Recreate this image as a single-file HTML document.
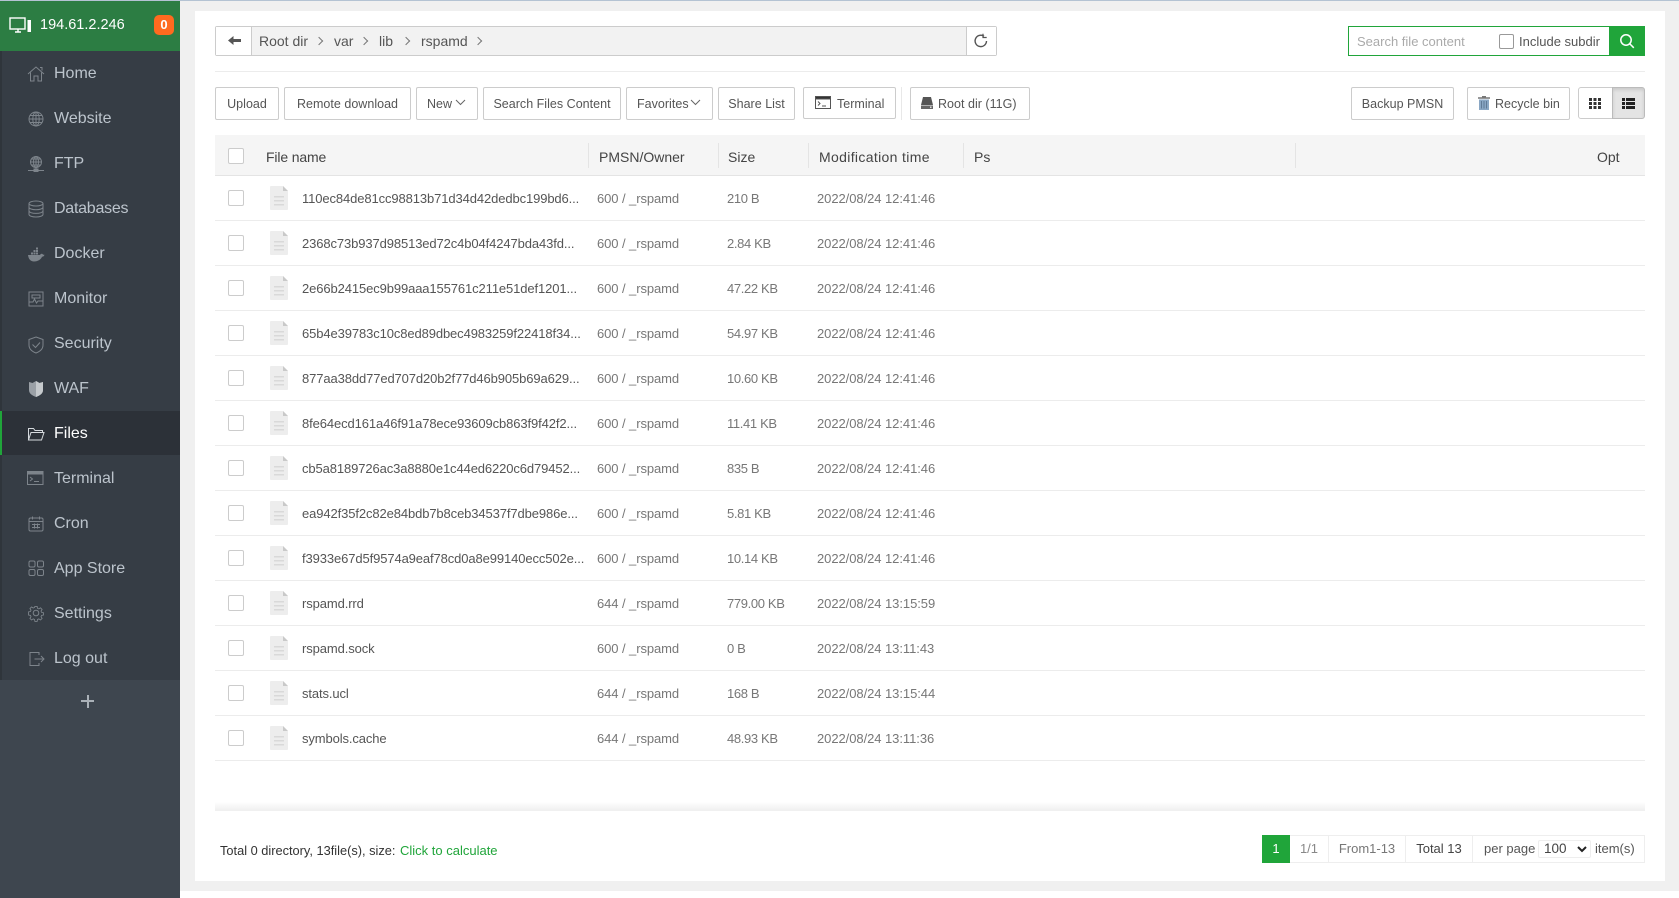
<!DOCTYPE html>
<html><head><meta charset="utf-8"><title>Files</title>
<style>
html,body{margin:0;padding:0;background:#fff;width:1679px;height:898px;overflow:hidden}
body{font-family:"Liberation Sans",Arial,sans-serif;position:relative;font-size:13px;color:#555}
div,span,svg{position:absolute;box-sizing:border-box}
.t{white-space:nowrap}
.m{left:54px;font-size:16px;color:#bcc4cc;line-height:20px;white-space:nowrap}
.ic{left:27px;width:18px;height:18px;fill:none;stroke:#7d848b;stroke-width:1}
.b{top:87px;height:33px;border:1px solid #ccc;border-radius:2px;background:#fff;color:#555;line-height:33px;font-size:12.5px;text-align:center;white-space:nowrap;letter-spacing:.02px}
.h{top:143px;width:1px;height:25px;background:#e4e4e4}
.ht{top:147px;font-size:14px;line-height:20px;color:#444;white-space:nowrap}
.r{left:215px;width:1430px;height:45px;border-bottom:1px solid #ececec}
.c{left:13px;top:14px;width:16px;height:16px;border:1px solid #ccc;border-radius:2px;background:#fff}
.f{left:55px;top:10px;width:18px;height:24px}
.r span{top:13px;line-height:20px;white-space:nowrap;font-size:13px}
.n{left:87px;color:#555;letter-spacing:-.11px}.o{left:382px;color:#777;letter-spacing:-.08px}.s{left:512px;color:#777;letter-spacing:-.35px}.d{left:602px;color:#777;letter-spacing:-.06px}
.p{top:835px;height:28px;border:1px solid #eee;border-left:0;line-height:26px;text-align:center;font-size:13px;white-space:nowrap}
.cv{width:6px;height:6px;border-top:1.3px solid #777;border-right:1.3px solid #777;transform:rotate(45deg);top:38px}
</style></head><body>
<svg width="0" height="0" style="position:absolute"><defs>
<symbol id="fi" viewBox="0 0 18 24"><path d="M0 1a1 1 0 0 1 1-1h12l5 5v18a1 1 0 0 1-1 1H1a1 1 0 0 1-1-1z" fill="#ededed"/><path d="M13 0l5 5h-5z" fill="#c9c9c9"/><path d="M4 10h10v1.5H4zM4 14h10v1.5H4zM4 18h10v1.5H4z" fill="#d9d9d9"/></symbol>
</defs></svg>

<div style="left:0;top:0;width:1679px;height:1px;background:#b4c3d3"></div>
<div style="left:0;top:1px;width:1679px;height:890px;background:#f0f0f0"></div>

<!-- sidebar -->
<div style="left:0;top:1px;width:180px;height:897px;background:#3e464f"></div>
<div style="left:0;top:51px;width:180px;height:629px;background:#363d45"></div>
<div style="left:0;top:51px;width:2px;height:629px;background:#2f353b"></div>
<div style="left:0;top:1px;width:180px;height:50px;background:#2c7d43"></div>
<svg style="left:9px;top:16px;width:24px;height:19px" viewBox="0 0 24 19" fill="none" stroke="#fff" stroke-width="1.4"><rect x="1" y="2" width="15" height="11"/><path d="M6 16h6M9 13v3"/><rect x="18.5" y="4" width="3.5" height="12" fill="#fff" stroke="none"/></svg>
<div class="t" style="left:40px;top:15px;font-size:14.5px;line-height:20px;color:#fff">194.61.2.246</div>
<div style="left:154px;top:15px;width:20px;height:20px;background:#ff6a1f;border-radius:5px;color:#fff;font-weight:bold;font-size:13px;line-height:20px;text-align:center">0</div>

<div style="left:0;top:411px;width:180px;height:44px;background:#2c3138"></div>
<div style="left:0;top:411px;width:2px;height:44px;background:#20a53a"></div>

<svg class="ic" style="top:65px" viewBox="0 0 18 18"><path d="M1 9l8-7 8 7M3.500 7.500V16H7v-5h4v5h3.500V7.500M13 2.500h2v3"/></svg>
<div class="m" style="top:64px">Home</div>
<svg class="ic" style="top:110px" viewBox="0 0 18 18"><circle cx="9" cy="9" r="7"/><ellipse cx="9" cy="9" rx="3.200" ry="7"/><path d="M2 9h14M3 5.500h12M3 12.500h12M9 2v14"/></svg>
<div class="m" style="top:109px">Website</div>
<svg class="ic" style="top:155px" viewBox="0 0 18 18"><circle cx="9" cy="7" r="5.500"/><ellipse cx="9" cy="7" rx="2.500" ry="5.500"/><path d="M3.500 7h11M4.500 4h9M4.500 10h9M9 1.500v11M9 13v2M1 15.500h16"/><rect x="7" y="14" width="4" height="2.500" fill="#7d848b"/></svg>
<div class="m" style="top:154px">FTP</div>
<svg class="ic" style="top:200px" viewBox="0 0 18 18"><ellipse cx="9" cy="3.500" rx="7" ry="2.500"/><path d="M2 3.500v11c0 1.400 3 2.500 7 2.500s7-1.100 7-2.500v-11M2 7.200c0 1.400 3 2.500 7 2.500s7-1.100 7-2.500M2 10.900c0 1.400 3 2.500 7 2.500s7-1.100 7-2.500"/></svg>
<div class="m" style="top:199px;letter-spacing:-.25px">Databases</div>
<svg class="ic" style="top:246px;stroke:none;fill:#7d848b" viewBox="0 0 18 18"><path d="M1 9h12c.5-1 1.500-1.500 2.500-1 .2.500 1 .8 2 .8-.5 1.500-1.500 2-2.500 2C14 13.500 11 15.500 7 15.500 3.500 15.500 1.500 13 1 9z"/><path d="M4 6.500h2v2H4zM6.500 6.500h2v2h-2zM9 6.500h2v2H9zM6.500 4h2v2h-2zM9 4h2v2H9zM9 1.500h2v2H9z"/></svg>
<div class="m" style="top:244px">Docker</div>
<svg class="ic" style="top:290px" viewBox="0 0 18 18"><rect x="2" y="2" width="14" height="14"/><path d="M2 12h4l1.500-3 2 4 1.500-2h5M5 5h8v3H5z"/></svg>
<div class="m" style="top:289px">Monitor</div>
<svg class="ic" style="top:336px" viewBox="0 0 18 18"><path d="M9 1l7 2.500V9c0 4-3 6.500-7 8-4-1.500-7-4-7-8V3.500z"/><path d="M5.500 8.500L8.500 11.500 13 6.500"/></svg>
<div class="m" style="top:334px">Security</div>
<svg class="ic" style="top:380px;stroke:none;fill:#9aa0a6" viewBox="0 0 18 18"><path d="M2 2l3.500 1L9 1l3.500 2L16 2v8c0 3.500-3 5.500-7 7-4-1.500-7-3.500-7-7z"/><path d="M9 1l3.500 2L16 2v8c0 3.500-3 5.500-7 7z" fill="#c5c9cc"/></svg>
<div class="m" style="top:379px">WAF</div>
<svg class="ic" style="top:425px;stroke:#d6dade" viewBox="0 0 18 18"><path d="M1.500 15V3.500h5l1.500 2h7.500v2M1.500 15l2.500-7.500h13L14.500 15z"/></svg>
<div class="m" style="top:424px;color:#fff">Files</div>
<svg class="ic" style="top:469px;left:27px;width:17px" viewBox="0 0 17 18"><rect x=".5" y="2.500" width="15.500" height="13"/><rect x=".5" y="2.500" width="15.500" height="2.500" fill="#7d848b"/><path d="M3 8l2.500 2L3 12M7 12.500h5"/></svg>
<div class="m" style="top:469px">Terminal</div>
<svg class="ic" style="top:515px" viewBox="0 0 18 18"><rect x="2" y="3" width="14" height="13" rx="1.500"/><path d="M2 6.500h14M5.500 1.500v3M12.500 1.500v3M5 9.500h8M5 12.500h8M7.500 8.500v5M10.500 8.500v5"/></svg>
<div class="m" style="top:514px">Cron</div>
<svg class="ic" style="top:559px" viewBox="0 0 18 18" stroke-width="1.200"><rect x="2" y="2" width="6" height="6" rx="1.500"/><rect x="10.500" y="2" width="6" height="6" rx="1.500"/><rect x="2" y="10.500" width="6" height="6" rx="1.500"/><rect x="10.500" y="10.500" width="6" height="6" rx="1.500"/></svg>
<div class="m" style="top:559px">App Store</div>
<svg class="ic" style="top:604px" viewBox="0 0 18 18"><circle cx="9" cy="9" r="2.800"/><path d="M7.700 1.500h2.600l.4 2.200 1.500.6 1.900-1.200 1.800 1.800-1.200 1.900.6 1.500 2.200.4v2.600l-2.200.4-.6 1.500 1.200 1.900-1.800 1.800-1.900-1.200-1.500.6-.4 2.200H7.700l-.4-2.200-1.500-.6-1.900 1.200-1.800-1.800 1.200-1.900-.6-1.500-2.200-.4V7.700l2.200-.4.600-1.500-1.200-1.900 1.800-1.800 1.900 1.200 1.500-.6z" transform="translate(1.100 1.100) scale(.88)"/></svg>
<div class="m" style="top:604px">Settings</div>
<svg class="ic" style="top:650px" viewBox="0 0 18 18"><path d="M12 5V2.500H3v13h9V13M7.500 9H17M14 6l3 3-3 3"/></svg>
<div class="m" style="top:649px">Log out</div>
<div style="left:81px;top:700px;width:13px;height:2px;background:#aab1b8"></div>
<div style="left:86.500px;top:694.500px;width:2px;height:13px;background:#aab1b8"></div>

<!-- card -->
<div style="left:195px;top:11px;width:1470px;height:870px;background:#fff"></div>

<!-- breadcrumb -->
<div style="left:215px;top:26px;width:782px;height:30px;border:1px solid #ccc;border-radius:2px;background:#f2f2f2"></div>
<div style="left:216px;top:27px;width:36px;height:28px;background:#fff;border-right:1px solid #ccc"></div>
<svg style="left:228px;top:35px;width:13px;height:11px" viewBox="0 0 13 11"><path d="M0 5.500L5.500 1v3H13v3H5.500v3z" fill="#555"/></svg>
<div class="t" style="left:259px;top:31px;font-size:14px;line-height:20px">Root dir</div>
<div class="cv" style="left:316px"></div>
<div class="t" style="left:334px;top:31px;font-size:14px;line-height:20px">var</div>
<div class="cv" style="left:361px"></div>
<div class="t" style="left:379px;top:31px;font-size:14px;line-height:20px">lib</div>
<div class="cv" style="left:403px"></div>
<div class="t" style="left:421px;top:31px;font-size:14px;line-height:20px">rspamd</div>
<div class="cv" style="left:475px"></div>
<div style="left:966px;top:27px;width:30px;height:28px;background:#fff;border-left:1px solid #ccc"></div>
<svg style="left:973px;top:33px;width:16px;height:16px" viewBox="0 0 16 16" fill="none" stroke="#555" stroke-width="1.400"><path d="M13.500 8A5.700 5.700 0 1 1 11 3.200"/><path d="M10 .8v3.700h3.700" stroke-width="1.200"/></svg>

<!-- search -->
<div style="left:1348px;top:26px;width:297px;height:30px;border:1px solid #20a53a;background:#fff"></div>
<div class="t" style="left:1357px;top:32px;line-height:20px;color:#aaa">Search file content</div>
<div style="left:1499px;top:34px;width:15px;height:15px;border:1px solid #999;border-radius:2px;background:#fff"></div>
<div class="t" style="left:1519px;top:32px;line-height:20px;color:#555">Include subdir</div>
<div style="left:1609px;top:26px;width:36px;height:30px;background:#20a53a"></div>
<svg style="left:1619px;top:33px;width:16px;height:16px" viewBox="0 0 16 16" fill="none" stroke="#fff" stroke-width="1.500"><circle cx="7" cy="7" r="5.200"/><path d="M11 11l3.800 3.800"/></svg>

<div style="left:215px;top:71px;width:1430px;height:1px;background:#ececec"></div>

<!-- toolbar -->
<div class="b" style="left:215px;width:64px">Upload</div>
<div class="b" style="left:284px;width:127px">Remote download</div>
<div class="b" style="left:416px;width:62px;text-align:left;padding-left:10px">New</div>
<svg style="left:455px;top:99px;width:11px;height:7px" viewBox="0 0 11 7" fill="none" stroke="#666" stroke-width="1"><path d="M1 1l4.500 4.500L10 1"/></svg>
<div class="b" style="left:483px;width:138px">Search Files Content</div>
<div class="b" style="left:626px;width:87px;text-align:left;padding-left:10px">Favorites</div>
<svg style="left:690px;top:99px;width:11px;height:7px" viewBox="0 0 11 7" fill="none" stroke="#666" stroke-width="1"><path d="M1 1l4.500 4.500L10 1"/></svg>
<div class="b" style="left:718px;width:77px">Share List</div>
<div class="b" style="left:803px;width:93px;height:32px;text-align:left;padding-left:33px">Terminal</div>
<svg style="left:815px;top:96px;width:16px;height:13px" viewBox="0 0 16 13" fill="none" stroke="#555" stroke-width="1"><rect x=".5" y=".5" width="15" height="12"/><rect x=".5" y=".5" width="15" height="2.500" fill="#333"/><path d="M3 5.500l2 2-2 2M7 10h4"/></svg>
<div style="left:901px;top:87px;width:1px;height:33px;background:#e8e8e8"></div>
<div class="b" style="left:910px;width:120px;text-align:left;padding-left:27px">Root dir (11G)</div>
<svg style="left:921px;top:97px;width:12px;height:12px" viewBox="0 0 12 12"><path d="M2 0h8l2 8H0z" fill="#555"/><rect y="8.500" width="12" height="3.500" fill="#666"/><rect x="9" y="9.500" width="1.500" height="1.500" fill="#ddd"/></svg>

<div class="b" style="left:1351px;width:103px">Backup PMSN</div>
<div class="b" style="left:1467px;width:103px;text-align:left;padding-left:27px">Recycle bin</div>
<svg style="left:1478px;top:96px;width:12px;height:14px" viewBox="0 0 12 14"><path d="M4 0h4v1.200h4v1.500H0V1.200h4z" fill="#777"/><path d="M1 3.500h10V14H1z" fill="#8aa7c4"/><path d="M3.500 5v7.500M6 5v7.500M8.500 5v7.500" stroke="#55708b" stroke-width=".8"/></svg>
<div style="left:1578px;top:87px;width:35px;height:32px;border:1px solid #ccc;border-radius:3px 0 0 3px;background:#fff"></div>
<div style="left:1612px;top:87px;width:33px;height:32px;border:1px solid #bbb;border-radius:0 3px 3px 0;background:#e4e4e4;box-shadow:inset 0 2px 3px rgba(0,0,0,.12)"></div>
<svg style="left:1589px;top:98px;width:12px;height:11px" viewBox="0 0 12 11" fill="#333"><path d="M0 0h3v3H0zM4.500 0h3v3h-3zM9 0h3v3H9zM0 4h3v3H0zM4.500 4h3v3h-3zM9 4h3v3H9zM0 8h3v3H0zM4.500 8h3v3h-3zM9 8h3v3H9z"/></svg>
<svg style="left:1622px;top:98px;width:13px;height:11px" viewBox="0 0 13 11" fill="#222"><path d="M0 0h3v3H0zM4 0h9v3H4zM0 4h3v3H0zM4 4h9v3H4zM0 8h3v3H0zM4 8h9v3H4z"/></svg>

<!-- table header -->
<div style="left:215px;top:135px;width:1430px;height:41px;background:#f5f5f5;border-bottom:1px solid #e4e4e4"></div>
<div style="left:228px;top:148px;width:16px;height:16px;border:1px solid #ccc;border-radius:2px;background:#fff"></div>
<div class="ht" style="left:266px;letter-spacing:-.15px">File name</div>
<div class="h" style="left:588px"></div>
<div class="ht" style="left:599px">PMSN/Owner</div>
<div class="h" style="left:718px"></div>
<div class="ht" style="left:728px">Size</div>
<div class="h" style="left:808px"></div>
<div class="ht" style="left:819px;letter-spacing:.34px">Modification time</div>
<div class="h" style="left:963px"></div>
<div class="ht" style="left:974px">Ps</div>
<div class="h" style="left:1295px"></div>
<div class="ht" style="left:1597px">Opt</div>

<!-- rows -->
<div class="r" style="top:176px"><div class="c"></div><svg class="f"><use href="#fi"/></svg><span class="n">110ec84de81cc98813b71d34d42dedbc199bd6...</span><span class="o">600 / _rspamd</span><span class="s">210 B</span><span class="d">2022/08/24 12:41:46</span></div>
<div class="r" style="top:221px"><div class="c"></div><svg class="f"><use href="#fi"/></svg><span class="n">2368c73b937d98513ed72c4b04f4247bda43fd...</span><span class="o">600 / _rspamd</span><span class="s">2.84 KB</span><span class="d">2022/08/24 12:41:46</span></div>
<div class="r" style="top:266px"><div class="c"></div><svg class="f"><use href="#fi"/></svg><span class="n">2e66b2415ec9b99aaa155761c211e51def1201...</span><span class="o">600 / _rspamd</span><span class="s">47.22 KB</span><span class="d">2022/08/24 12:41:46</span></div>
<div class="r" style="top:311px"><div class="c"></div><svg class="f"><use href="#fi"/></svg><span class="n">65b4e39783c10c8ed89dbec4983259f22418f34...</span><span class="o">600 / _rspamd</span><span class="s">54.97 KB</span><span class="d">2022/08/24 12:41:46</span></div>
<div class="r" style="top:356px"><div class="c"></div><svg class="f"><use href="#fi"/></svg><span class="n">877aa38dd77ed707d20b2f77d46b905b69a629...</span><span class="o">600 / _rspamd</span><span class="s">10.60 KB</span><span class="d">2022/08/24 12:41:46</span></div>
<div class="r" style="top:401px"><div class="c"></div><svg class="f"><use href="#fi"/></svg><span class="n">8fe64ecd161a46f91a78ece93609cb863f9f42f2...</span><span class="o">600 / _rspamd</span><span class="s">11.41 KB</span><span class="d">2022/08/24 12:41:46</span></div>
<div class="r" style="top:446px"><div class="c"></div><svg class="f"><use href="#fi"/></svg><span class="n">cb5a8189726ac3a8880e1c44ed6220c6d79452...</span><span class="o">600 / _rspamd</span><span class="s">835 B</span><span class="d">2022/08/24 12:41:46</span></div>
<div class="r" style="top:491px"><div class="c"></div><svg class="f"><use href="#fi"/></svg><span class="n">ea942f35f2c82e84bdb7b8ceb34537f7dbe986e...</span><span class="o">600 / _rspamd</span><span class="s">5.81 KB</span><span class="d">2022/08/24 12:41:46</span></div>
<div class="r" style="top:536px"><div class="c"></div><svg class="f"><use href="#fi"/></svg><span class="n">f3933e67d5f9574a9eaf78cd0a8e99140ecc502e...</span><span class="o">600 / _rspamd</span><span class="s">10.14 KB</span><span class="d">2022/08/24 12:41:46</span></div>
<div class="r" style="top:581px"><div class="c"></div><svg class="f"><use href="#fi"/></svg><span class="n">rspamd.rrd</span><span class="o">644 / _rspamd</span><span class="s">779.00 KB</span><span class="d">2022/08/24 13:15:59</span></div>
<div class="r" style="top:626px"><div class="c"></div><svg class="f"><use href="#fi"/></svg><span class="n">rspamd.sock</span><span class="o">600 / _rspamd</span><span class="s">0 B</span><span class="d">2022/08/24 13:11:43</span></div>
<div class="r" style="top:671px"><div class="c"></div><svg class="f"><use href="#fi"/></svg><span class="n">stats.ucl</span><span class="o">644 / _rspamd</span><span class="s">168 B</span><span class="d">2022/08/24 13:15:44</span></div>
<div class="r" style="top:716px"><div class="c"></div><svg class="f"><use href="#fi"/></svg><span class="n">symbols.cache</span><span class="o">644 / _rspamd</span><span class="s">48.93 KB</span><span class="d">2022/08/24 13:11:36</span></div>

<!-- footer -->
<div style="left:215px;top:802px;width:1430px;height:9px;background:linear-gradient(#fff,#f0f0f0 90%)"></div>
<div class="t" style="left:220px;top:841px;font-size:12.800px;line-height:20px;color:#333">Total 0 directory, 13file(s), size:</div>
<div class="t" style="left:400px;top:841px;font-size:13px;line-height:20px;color:#20a53a">Click to calculate</div>

<div style="left:1262px;top:835px;width:28px;height:28px;background:#20a53a;color:#fff;line-height:28px;text-align:center;font-size:13px">1</div>
<div class="p" style="left:1290px;width:39px;color:#888">1/1</div>
<div class="p" style="left:1329px;width:77px;color:#777">From1-13</div>
<div class="p" style="left:1406px;width:67px;color:#444">Total 13</div>
<div class="p" style="left:1473px;width:172px"></div>
<div class="t" style="left:1484px;top:839px;line-height:20px;color:#555">per page</div>
<div style="left:1538px;top:840px;width:53px;height:18px;border:1px solid #eee;border-radius:2px;background:#fff"></div>
<div class="t" style="left:1544px;top:839px;line-height:20px;font-size:13.500px;color:#444">100</div>
<svg style="left:1577px;top:846px;width:10px;height:7px" viewBox="0 0 10 7" fill="none" stroke="#222" stroke-width="2"><path d="M1 1l4 4 4-4"/></svg>
<div class="t" style="left:1595px;top:839px;line-height:20px;color:#555">item(s)</div>
</body></html>
